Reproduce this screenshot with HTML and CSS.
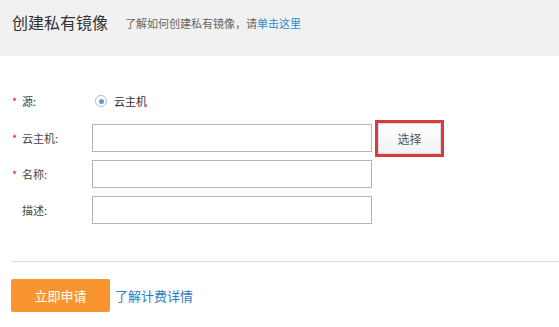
FILE: index.html
```html
<!DOCTYPE html>
<html lang="zh">
<head>
<meta charset="utf-8">
<link rel="stylesheet" href="styles.css">
</head>
<body>
<div class="header">
  <h1 class="title">创建私有镜像</h1>
  <span class="sub">了解如何创建私有镜像，请<a class="link" href="#">单击这里</a></span>
</div>
<form class="form">
  <div class="row row-radio">
    <label class="label"><span class="star">*</span>源:</label>
    <div class="control">
      <span class="radio"><span class="dot"></span></span>
      <span class="radio-text">云主机</span>
    </div>
  </div>
  <div class="row">
    <label class="label"><span class="star">*</span>云主机:</label>
    <div class="control">
      <input class="input" type="text">
      <button class="pick" type="button">选择</button>
    </div>
  </div>
  <div class="row">
    <label class="label"><span class="star">*</span>名称:</label>
    <div class="control"><input class="input" type="text"></div>
  </div>
  <div class="row">
    <label class="label"><span class="star"></span>描述:</label>
    <div class="control"><input class="input" type="text"></div>
  </div>
</form>
<div class="divider"></div>
<div class="actions">
  <button class="submit" type="button">立即申请</button>
  <a class="more" href="#">了解计费详情</a>
</div>
</body>
</html>
```
FILE: styles.css
```css
html, body {
  margin: 0;
  padding: 0;
  background: #fff;
  font-family: "Noto Sans CJK SC", "Noto Sans", sans-serif;
  color: #333;
}
.header {
  height: 56px;
  background: #f1f1f1;
  display: flex;
  align-items: center;
  padding: 0 0 12px 12px;
  box-sizing: border-box;
}
.title {
  margin: 0;
  font-size: 16px;
  font-weight: normal;
  color: #333;
  line-height: 20px;
}
.sub {
  margin-left: 17px;
  font-size: 11px;
  color: #666;
  line-height: 20px;
  margin-top: 1px;
}
.link {
  color: #2a8acd;
  text-decoration: none;
}
.form {
  margin: 35px 0 0 11px;
  display: flex;
  flex-direction: column;
  gap: 8px;
}
.row {
  display: flex;
  align-items: center;
  height: 28px;
}
.row-radio {
  height: 20px;
  margin-bottom: 5px;
}
.label {
  width: 81px;
  display: flex;
  align-items: center;
  font-size: 11px;
  color: #444;
}
.star {
  display: inline-block;
  width: 10px;
  color: #c8282e;
  font-size: 11px;
  margin-left: 1px;
}
.control {
  display: flex;
  align-items: center;
}
.radio {
  width: 10px;
  height: 10px;
  border: 1px solid #b9b9b9;
  border-radius: 50%;
  margin-left: 3px;
  display: flex;
  align-items: center;
  justify-content: center;
  background: #fff;
}
.dot {
  width: 5px;
  height: 5px;
  border-radius: 50%;
  background: #5b9bd5;
}
.radio-text {
  margin-left: 7px;
  font-size: 11px;
  color: #333;
}
.input {
  width: 280px;
  height: 28px;
  box-sizing: border-box;
  border: 1px solid #b4b4b4;
  margin: 0;
  padding: 0 6px;
  background: #fff;
  outline: none;
}
.pick {
  margin-left: 6px;
  width: 63px;
  height: 31px;
  box-sizing: border-box;
  border: 1px solid #dcdcdc;
  background: linear-gradient(#fff, #f2f2f2);
  font-family: inherit;
  font-size: 12px;
  color: #555;
  padding: 0;
  outline: 3px solid #d63c3c;
  outline-offset: 0;
}
.divider {
  margin: 37px 0 0 11px;
  height: 1px;
  background: #dcdcdc;
}
.actions {
  margin: 17px 0 0 11px;
  display: flex;
  align-items: center;
}
.submit {
  width: 99px;
  height: 33px;
  border: 0;
  border-radius: 2px;
  background: #f8952e;
  color: #fff;
  font-family: inherit;
  font-size: 13px;
  padding: 0;
}
.more {
  margin-left: 5px;
  font-size: 13px;
  color: #2f7bc1;
  text-decoration: none;
}
```
